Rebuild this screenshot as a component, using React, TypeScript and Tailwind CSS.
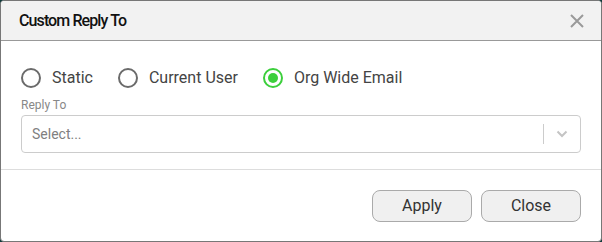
import React from "react";

function Radio({ checked, label }: { checked?: boolean; label: string }) {
  return (
    <label className="flex items-center gap-[11px]">
      {checked ? (
        <span className="flex h-[20px] w-[20px] items-center justify-center rounded-full border-2 border-[#3ccf3c]">
          <span className="h-[10px] w-[10px] rounded-full bg-[#3ccf3c]" />
        </span>
      ) : (
        <span className="h-[20px] w-[20px] rounded-full border-2 border-[#6b6b6b]" />
      )}
      <span className="text-[16px] text-[#444]">{label}</span>
    </label>
  );
}

export default function App() {
  return (
    <div className="h-[242px] w-[602px] bg-[#0f3b3b]" style={{ fontFamily: "Roboto, 'Liberation Sans', sans-serif" }}>
      <div className="flex h-[242px] w-[602px] flex-col overflow-hidden rounded-[4px] border border-[#777] bg-white">
        <div className="flex h-[40px] items-center justify-between border-b border-[#999] bg-[#f2f2f2] pl-[18px] pr-[16px]">
          <span className="text-[16px] font-medium tracking-[-0.9px] text-[#111]">Custom Reply To</span>
          <svg width="16" height="16" viewBox="0 0 16 16" className="mt-[1px]">
            <path d="M2 2 L14 14 M14 2 L2 14" stroke="#9a9a9a" strokeWidth="2" />
          </svg>
        </div>
        <div className="flex flex-col px-[20px] pt-[25px]">
          <div className="flex items-center">
            <Radio label="Static" />
            <div className="w-[25px]" />
            <Radio label="Current User" />
            <div className="w-[25px]" />
            <Radio checked label="Org Wide Email" />
          </div>
          <div className="mt-[8px] text-[12px] leading-[14px] text-[#888]">Reply To</div>
          <div className="mt-[3px] flex h-[38px] items-center rounded-[4px] border border-[#ccc] pl-[10px]">
            <span className="flex-1 text-[14px] text-[#808080]">Select...</span>
            <span className="h-[20px] w-px bg-[#ccc]" />
            <span className="flex w-[36px] items-center justify-center">
              <svg width="12" height="8" viewBox="0 0 12 8">
                <path d="M1.5 1.5 L6 6 L10.5 1.5" stroke="#c4c4c4" strokeWidth="2" fill="none" />
              </svg>
            </span>
          </div>
        </div>
        <div className="mt-[16px] border-t border-[#ddd]" />
        <div className="flex justify-end gap-[9px] pr-[20px] pt-[20px]">
          <button className="h-[32px] w-[100px] rounded-[8px] border border-[#aaa] bg-[#f0f0f0] text-[16px] text-[#333]">Apply</button>
          <button className="h-[32px] w-[100px] rounded-[8px] border border-[#aaa] bg-[#f0f0f0] text-[16px] text-[#333]">Close</button>
        </div>
      </div>
    </div>
  );
}
